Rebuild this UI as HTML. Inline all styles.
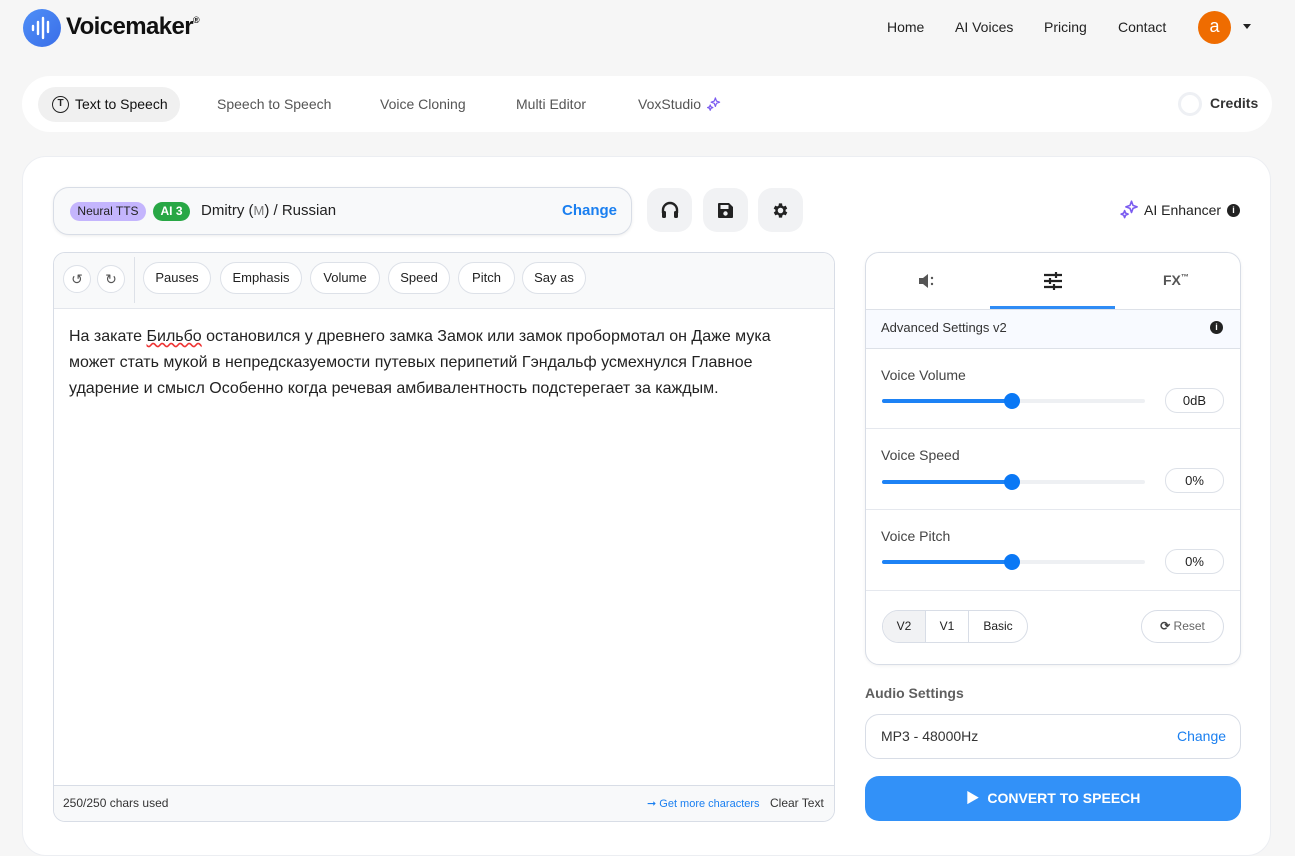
<!DOCTYPE html>
<html><head><meta charset="utf-8">
<style>
*{box-sizing:border-box;margin:0;padding:0}
body{width:1295px;height:835px;overflow:hidden;background:#f6f6f6;font-family:"Liberation Sans","Noto Sans CJK SC",sans-serif;color:#222;position:relative}
.a{position:absolute}
.nav{font-size:14px;color:#222;top:19px}
.tab{font-size:14px;color:#555;top:96px}
.pill{position:absolute;top:262px;height:32px;border:1px solid #dde1e8;border-radius:16px;background:#fff;font-size:13px;color:#222;line-height:30px;text-align:center}
.ib{position:absolute;top:188px;width:45px;height:44px;background:#f1f2f4;border-radius:14px;display:flex;align-items:center;justify-content:center}
.lbl{position:absolute;left:881px;font-size:14px;color:#444}
.track{position:absolute;left:882px;width:263px;height:4px;background:#eef0f3;border-radius:2px}
.track i{position:absolute;left:0;top:0;height:4px;width:130px;background:#1d82f5;border-radius:2px}
.track b{position:absolute;left:122px;top:-6px;width:16px;height:16px;border-radius:50%;background:#0a78f5}
.val{position:absolute;left:1165px;width:59px;height:25px;border:1px solid #dde1e8;border-radius:12px;font-size:13px;text-align:center;line-height:23px;color:#222}
.sep{position:absolute;left:866px;width:374px;height:1px;background:#e5e8ee}
</style></head><body>
<div class="a" style="left:23px;top:9px;width:38px;height:38px;border-radius:50%;background:linear-gradient(135deg,#4f8ff7,#3a6ee8)">
<svg width="38" height="38" viewBox="0 0 38 38"><g stroke="#fff" stroke-width="2.4" stroke-linecap="round"><line x1="10" y1="17" x2="10" y2="21"/><line x1="15" y1="13" x2="15" y2="25"/><line x1="20" y1="9" x2="20" y2="29"/><line x1="25" y1="13" x2="25" y2="23"/></g></svg></div>
<div class="a" style="left:66px;top:13px;font-size:24px;font-weight:bold;color:#111;letter-spacing:-0.6px">Voicemaker<sup style="font-size:9px;vertical-align:top;position:relative;top:2px">®</sup></div>
<div class="a nav" style="left:887px">Home</div>
<div class="a nav" style="left:955px">AI Voices</div>
<div class="a nav" style="left:1044px">Pricing</div>
<div class="a nav" style="left:1118px">Contact</div>
<div class="a" style="left:1198px;top:11px;width:33px;height:33px;border-radius:50%;background:#ef6c00;color:#fff;font-size:18px;text-align:center;line-height:31px">a</div>
<div class="a" style="left:1243px;top:24px;border-left:4px solid transparent;border-right:4px solid transparent;border-top:5px solid #222"></div>
<div class="a" style="left:22px;top:76px;width:1250px;height:56px;background:#fff;border-radius:28px"></div>
<div class="a" style="left:38px;top:87px;width:142px;height:35px;background:#f0f0f0;border-radius:18px"></div>
<div class="a" style="left:52px;top:96px;width:17px;height:17px;border:1.5px solid #222;border-radius:50%;font-size:10px;font-weight:bold;text-align:center;line-height:14px">T</div>
<div class="a tab" style="left:75px;color:#111">Text to Speech</div>
<div class="a tab" style="left:217px">Speech to Speech</div>
<div class="a tab" style="left:380px">Voice Cloning</div>
<div class="a tab" style="left:516px">Multi Editor</div>
<div class="a tab" style="left:638px">VoxStudio</div>
<svg class="a" style="left:706px;top:97px" width="15" height="15" viewBox="0 0 16 16"><path d="M10 1l1.2 3.3L14.5 5.5 11.2 6.7 10 10 8.8 6.7 5.5 5.5 8.8 4.3z M4.5 8.5l.8 2 2 .8-2 .8-.8 2-.8-2-2-.8 2-.8z" fill="none" stroke="#7b5cf0" stroke-width="1.3" stroke-linejoin="round"/></svg>
<div class="a" style="left:1178px;top:92px;width:24px;height:24px;border:3px solid #eef0f4;border-radius:50%"></div>
<div class="a" style="left:1210px;top:95px;font-size:14px;font-weight:bold;color:#333">Credits</div>
<div class="a" style="left:22px;top:156px;width:1249px;height:700px;background:#fff;border-radius:24px;border:1px solid #eceef2"></div>
<div class="a" style="left:53px;top:187px;width:579px;height:48px;background:#f8f9fa;border:1px solid #d8dde6;border-radius:16px;box-shadow:0 1px 3px rgba(0,0,0,.08)"></div>
<div class="a" style="left:70px;top:202px;width:76px;height:19px;background:#c4b5fd;border-radius:10px;font-size:12px;text-align:center;line-height:19px;color:#222">Neural TTS</div>
<div class="a" style="left:153px;top:202px;width:37px;height:19px;background:#28a745;border-radius:10px;font-size:12px;text-align:center;line-height:19px;color:#fff;font-weight:bold">AI 3</div>
<div class="a" style="left:201px;top:202px;font-size:15px;color:#222">Dmitry (<span style="color:#777;font-size:13px">M</span>) / Russian</div>
<div class="a" style="left:562px;top:202px;font-size:15px;color:#1a7ff0;font-weight:bold">Change</div>
<div class="ib" style="left:647px"><svg width="20" height="18" viewBox="0 0 20 18"><path d="M3 12V9a7 7 0 0 1 14 0v3" fill="none" stroke="#222" stroke-width="2.4"/><rect x="2" y="10" width="4" height="7" rx="1.5" fill="#222"/><rect x="14" y="10" width="4" height="7" rx="1.5" fill="#222"/></svg></div>
<div class="ib" style="left:703px"><svg width="17" height="17" viewBox="0 0 17 17"><path d="M1 2a1 1 0 0 1 1-1h10l4 4v10a1 1 0 0 1-1 1H2a1 1 0 0 1-1-1z" fill="#222"/><rect x="3.5" y="3" width="8" height="4" fill="#f1f2f4"/><circle cx="8.5" cy="11.5" r="2.2" fill="#f1f2f4"/></svg></div>
<div class="ib" style="left:758px"><svg width="19" height="19" viewBox="0 0 24 24"><path fill="#222" d="M19.4 13a7.5 7.5 0 0 0 0-2l2.1-1.6-2-3.5-2.5 1a7.6 7.6 0 0 0-1.7-1L15 3h-4l-.4 2.9a7.6 7.6 0 0 0-1.7 1l-2.5-1-2 3.5L6.6 11a7.5 7.5 0 0 0 0 2l-2.1 1.6 2 3.5 2.5-1a7.6 7.6 0 0 0 1.7 1L11 21h4l.4-2.9a7.6 7.6 0 0 0 1.7-1l2.5 1 2-3.5zM13 15.5a3.5 3.5 0 1 1 0-7 3.5 3.5 0 0 1 0 7z" transform="translate(-1 0)"/></svg></div>
<svg class="a" style="left:1119px;top:200px" width="20" height="20" viewBox="0 0 16 16"><path d="M10 1l1.2 3.3L14.5 5.5 11.2 6.7 10 10 8.8 6.7 5.5 5.5 8.8 4.3z M4.5 8.5l.8 2 2 .8-2 .8-.8 2-.8-2-2-.8 2-.8z" fill="none" stroke="#7b5cf0" stroke-width="1.3" stroke-linejoin="round"/></svg>
<div class="a" style="left:1144px;top:202px;font-size:14px;color:#222">AI Enhancer</div>
<div class="a" style="left:1227px;top:204px;width:13px;height:13px;border-radius:50%;background:#222;color:#fff;font-size:9px;font-weight:bold;text-align:center;line-height:13px">i</div>
<div class="a" style="left:53px;top:252px;width:782px;height:570px;border:1px solid #d8dde6;border-radius:12px;overflow:hidden;background:#fff">
 <div class="a" style="left:0;top:0;width:782px;height:56px;background:#f8f9fa;border-bottom:1px solid #e3e6ec"></div>
 <div class="a" style="left:0;top:532px;width:782px;height:38px;background:#f8f9fa;border-top:1px solid #d8dde6"></div>
</div>
<div class="a" style="left:63px;top:265px;width:28px;height:28px;border:1px solid #dde1e8;border-radius:50%;background:#fff;text-align:center;line-height:26px;font-size:14px;color:#555">↺</div>
<div class="a" style="left:97px;top:265px;width:28px;height:28px;border:1px solid #dde1e8;border-radius:50%;background:#fff;text-align:center;line-height:26px;font-size:14px;color:#555">↻</div>
<div class="a" style="left:134px;top:257px;width:1px;height:46px;background:#dde1e8"></div>
<div class="pill" style="left:143px;width:68px">Pauses</div>
<div class="pill" style="left:220px;width:82px">Emphasis</div>
<div class="pill" style="left:310px;width:70px">Volume</div>
<div class="pill" style="left:388px;width:62px">Speed</div>
<div class="pill" style="left:458px;width:57px">Pitch</div>
<div class="pill" style="left:522px;width:64px">Say as</div>
<div class="a" style="left:69px;top:324px;width:740px;font-size:16px;line-height:26px;color:#222">На закате <span style="text-decoration:underline wavy #e33">Бильбо</span> остановился у древнего замка Замок или замок пробормотал он Даже мука может стать мукой в непредсказуемости путевых перипетий Гэндальф усмехнулся Главное ударение и смысл Особенно когда речевая амбивалентность подстерегает за каждым.</div>
<div class="a" style="left:63px;top:796px;font-size:12px;color:#333">250/250 chars used</div>
<div class="a" style="left:647px;top:797px;font-size:11px;color:#1a7ff0">➞ Get more characters</div>
<div class="a" style="left:770px;top:796px;font-size:12px;color:#333">Clear Text</div>
<div class="a" style="left:865px;top:252px;width:376px;height:413px;border:1px solid #d8dde6;border-radius:14px;background:#fff;box-shadow:0 1px 3px rgba(0,0,0,.06)"></div>
<svg class="a" style="left:918px;top:272px" width="20" height="18" viewBox="0 0 20 18"><path d="M1 6h4l5-4v14l-5-4H1z" fill="#555"/><circle cx="14" cy="6" r="1.2" fill="#555"/><circle cx="14" cy="12" r="1.2" fill="#555"/></svg>
<svg class="a" style="left:1043px;top:271px" width="20" height="20" viewBox="0 0 20 20"><g stroke="#222" stroke-width="2.2"><line x1="1" y1="4" x2="19" y2="4"/><line x1="1" y1="10" x2="19" y2="10"/><line x1="1" y1="16" x2="19" y2="16"/><line x1="13" y1="1" x2="13" y2="7"/><line x1="7" y1="7" x2="7" y2="13"/><line x1="11" y1="13" x2="11" y2="19"/></g></svg>
<div class="a" style="left:1163px;top:272px;font-size:14px;font-weight:bold;color:#555">FX<sup style="font-size:8px">™</sup></div>
<div class="a" style="left:990px;top:306px;width:125px;height:3px;background:#2f8cf5"></div>
<div class="a" style="left:866px;top:309px;width:374px;height:40px;background:#f8faff;border-top:1px solid #dde1e8;border-bottom:1px solid #dde1e8"></div>
<div class="a" style="left:881px;top:320px;font-size:13px;color:#333">Advanced Settings v2</div>
<div class="a" style="left:1210px;top:321px;width:13px;height:13px;border-radius:50%;background:#222;color:#fff;font-size:9px;font-weight:bold;text-align:center;line-height:13px">i</div>
<div class="lbl" style="top:367px">Voice Volume</div>
<div class="track" style="top:399px"><i></i><b></b></div>
<div class="val" style="top:388px">0dB</div>
<div class="sep" style="top:428px"></div>
<div class="lbl" style="top:447px">Voice Speed</div>
<div class="track" style="top:480px"><i></i><b></b></div>
<div class="val" style="top:468px">0%</div>
<div class="sep" style="top:509px"></div>
<div class="lbl" style="top:528px">Voice Pitch</div>
<div class="track" style="top:560px"><i></i><b></b></div>
<div class="val" style="top:549px">0%</div>
<div class="sep" style="top:590px"></div>
<div class="a" style="left:882px;top:610px;width:146px;height:33px;border:1px solid #d8dde6;border-radius:17px;overflow:hidden;display:flex;font-size:12px">
 <div style="width:43px;background:#f1f2f4;text-align:center;line-height:31px;border-right:1px solid #d8dde6">V2</div>
 <div style="width:43px;text-align:center;line-height:31px;border-right:1px solid #d8dde6">V1</div>
 <div style="flex:1;text-align:center;line-height:31px">Basic</div>
</div>
<div class="a" style="left:1141px;top:610px;width:83px;height:33px;border:1px solid #d8dde6;border-radius:17px;font-size:12px;color:#666;text-align:center;line-height:31px"><b style="color:#444">⟳</b> Reset</div>
<div class="a" style="left:865px;top:685px;font-size:14px;color:#444;font-weight:bold;opacity:.85">Audio Settings</div>
<div class="a" style="left:865px;top:714px;width:376px;height:45px;border:1px solid #d8dde6;border-radius:14px;background:#fff"></div>
<div class="a" style="left:881px;top:728px;font-size:14px;color:#333">MP3 - 48000Hz</div>
<div class="a" style="left:1177px;top:728px;font-size:14px;color:#1a7ff0">Change</div>
<div class="a" style="left:865px;top:776px;width:376px;height:45px;background:#3291f8;border-radius:14px;color:#fff;font-size:14px;font-weight:bold;text-align:center;line-height:45px">▶&nbsp; CONVERT TO SPEECH</div>
</body></html>
